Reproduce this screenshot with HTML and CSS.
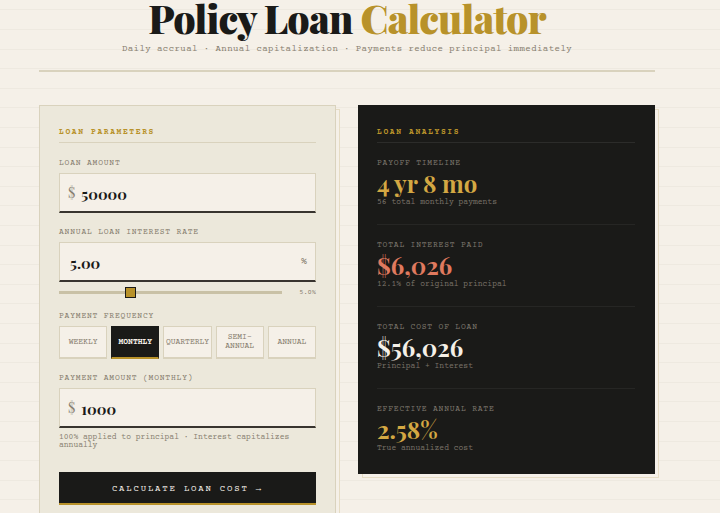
FILE: index.html
```html
<!DOCTYPE html>
<html lang="en">
<head>
<meta charset="utf-8">
<meta name="viewport" content="width=device-width, initial-scale=1">
<title>Policy Loan Calculator</title>
<link rel="stylesheet" href="styles.css">
</head>
<body>
<div class="page">
  <header class="masthead">
    <h1>Policy Loan <span class="accent">Calculator</span></h1>
    <p>Daily accrual · Annual capitalization · Payments reduce principal immediately</p>
  </header>
  <main class="columns">
    <form class="panel parameters">
      <h2>Loan Parameters</h2>
      <div class="field">
        <label for="amount">Loan Amount</label>
        <div class="box"><span class="prefix">$</span><input id="amount" type="text" inputmode="decimal" value="50000"></div>
      </div>
      <div class="field">
        <label for="rate">Annual Loan Interest Rate</label>
        <div class="box"><input id="rate" type="text" inputmode="decimal" value="5.00"><span class="suffix">%</span></div>
        <div class="slider">
          <input type="range" aria-label="Interest rate" min="0.5" max="15" step="0.25" value="5">
          <output>5.0%</output>
        </div>
      </div>
      <fieldset class="field">
        <legend>Payment Frequency</legend>
        <div class="frequency">
          <button type="button">Weekly</button>
          <button type="button" class="active" aria-pressed="true">Monthly</button>
          <button type="button">Quarterly</button>
          <button type="button">Semi-Annual</button>
          <button type="button">Annual</button>
        </div>
      </fieldset>
      <div class="field">
        <label for="payment">Payment Amount (Monthly)</label>
        <div class="box"><span class="prefix">$</span><input id="payment" type="text" inputmode="decimal" value="1000"></div>
        <p class="hint">100% applied to principal · Interest capitalizes annually</p>
      </div>
      <button type="button" class="submit">Calculate Loan Cost →</button>
    </form>
    <section class="panel analysis">
      <h2>Loan Analysis</h2>
      <div class="result">
        <h3>Payoff Timeline</h3>
        <p class="value gold">4 yr 8 mo</p>
        <p class="note">56 total monthly payments</p>
      </div>
      <div class="result">
        <h3>Total Interest Paid</h3>
        <p class="value coral">$6,026</p>
        <p class="note">12.1% of original principal</p>
      </div>
      <div class="result">
        <h3>Total Cost of Loan</h3>
        <p class="value">$56,026</p>
        <p class="note">Principal + Interest</p>
      </div>
      <div class="result">
        <h3>Effective Annual Rate</h3>
        <p class="value gold">2.58%</p>
        <p class="note">True annualized cost</p>
      </div>
    </section>
  </main>
</div>
</body>
</html>
```
FILE: styles.css
```css
:root {
  --paper: #f5f0e8;
  --panel: #ece8db;
  --ink: #1a1a18;
  --rule: #d9d2bd;
  --line: #eee9e0;
  --muted: #857c6d;
  --gold: #b8922a;
  --serif: "Playfair Display", "Liberation Serif", serif;
  --mono: "Courier Prime", "Liberation Mono", monospace;
}

* {
  box-sizing: border-box;
  margin: 0;
  padding: 0;
}

/* Ledger lines: five rules in every 98px */
body {
  background:
    linear-gradient(
      transparent 9px, var(--line) 9px, var(--line) 10px,
      transparent 10px, transparent 29px, var(--line) 29px, var(--line) 30px,
      transparent 30px, transparent 49px, var(--line) 49px, var(--line) 50px,
      transparent 50px, transparent 68px, var(--line) 68px, var(--line) 69px,
      transparent 69px, transparent 88px, var(--line) 88px, var(--line) 89px,
      transparent 89px) 0 0 / 100% 98px,
    var(--paper);
  color: var(--ink);
  font-family: var(--mono);
  font-size: 8px;
}

.page {
  padding: 0 65px 20px 39px;
}

.masthead {
  border-bottom: 2px solid var(--rule);
  margin-bottom: 33px;
  padding-bottom: 15px;
  text-align: center;
}

h1 {
  font: 900 39px/36px var(--serif);
  letter-spacing: -0.02em;
  margin-bottom: 7px;
}

.accent {
  color: var(--gold);
}

.masthead p {
  color: var(--muted);
  font-size: 9px;
  letter-spacing: 0.05em;
  line-height: 12px;
}

.columns {
  align-items: start;
  display: grid;
  gap: 22px;
  grid-template-columns: repeat(2, minmax(0, 1fr));
  isolation: isolate;
}

.panel {
  border: 1px solid var(--rule);
  padding: 20px 19px;
  position: relative;
}

/* Offset sheet behind each panel */
.panel::before {
  background: var(--paper);
  border: 1px solid #e6dcc4;
  content: "";
  inset: 3px -5px -5px 3px;
  position: absolute;
  z-index: -2;
}

.panel::after {
  content: "";
  inset: 0;
  position: absolute;
  z-index: -1;
}

.parameters::after {
  background: var(--panel);
}

.analysis {
  border-color: var(--ink);
  color: var(--paper);
  padding: 20px 19px 20px 18px;
}

.analysis::after {
  background: var(--ink);
}

h2 {
  border-bottom: 1px solid var(--rule);
  color: var(--gold);
  font-size: 8px;
  letter-spacing: 0.2em;
  line-height: 14px;
  margin-bottom: 15px;
  padding-bottom: 2px;
  text-transform: uppercase;
}

.analysis h2 {
  border-color: #2c2c2a;
}

.field {
  border: 0;
  margin-bottom: 14px;
}

label,
legend,
h3 {
  color: var(--muted);
  display: block;
  font-size: 8px;
  font-weight: 400;
  letter-spacing: 0.1em;
  line-height: 12px;
  margin-bottom: 3px;
  text-transform: uppercase;
}

.box {
  align-items: center;
  background: var(--paper);
  border: 1px solid var(--rule);
  border-bottom: 2px solid #38342f;
  display: flex;
  height: 40px;
  padding: 0 8px;
}

.box input {
  background: none;
  border: 0;
  color: var(--ink);
  flex: 1;
  font: 700 15px/24px var(--serif);
  min-width: 0;
  outline: 0;
  padding: 2px 2px 0;
}

.prefix {
  color: var(--muted);
  font: 14px/24px var(--serif);
  margin-right: 4px;
}

.suffix {
  color: var(--muted);
  font-size: 10px;
}

.slider {
  align-items: center;
  color: var(--muted);
  display: flex;
  font-size: 7px;
  gap: 14px;
  height: 10px;
  margin-top: 5px;
}

.slider input {
  appearance: none;
  background: #c9c1a6;
  flex: 1;
  height: 3px;
  min-width: 0;
}

.slider input::-webkit-slider-thumb {
  appearance: none;
  background: var(--gold);
  border: 1px solid var(--ink);
  height: 11px;
  width: 11px;
}

.slider output {
  min-width: 20px;
  text-align: right;
}

.frequency {
  display: grid;
  gap: 4px;
  grid-template-columns: repeat(5, minmax(0, 1fr));
}

.frequency button {
  background: var(--paper);
  border: 1px solid var(--rule);
  border-bottom-width: 2px;
  color: var(--muted);
  font: 8px/9px var(--mono);
  height: 33px;
  text-transform: uppercase;
}

.frequency .active {
  background: var(--ink);
  border-color: var(--ink);
  border-bottom-color: var(--gold);
  color: var(--paper);
  font-weight: 700;
}

.hint {
  color: var(--muted);
  line-height: 8px;
  margin-top: 6px;
}

.submit {
  background: var(--ink);
  border: 0;
  border-bottom: 2px solid var(--gold);
  color: var(--paper);
  font: 9px/12px var(--mono);
  letter-spacing: 0.2em;
  margin-top: 8px;
  padding: 11px 0 8px;
  text-transform: uppercase;
  width: 100%;
}

.result {
  border-bottom: 1px solid #262624;
  margin-bottom: 15px;
  padding-bottom: 17px;
}

.result:last-child {
  border: 0;
  margin: 0;
  padding: 0;
}

.analysis h3 {
  color: #7d776d;
  margin-bottom: 2px;
}

.value {
  font: 700 24px/22px var(--serif);
  margin-bottom: 5px;
}

.gold {
  color: #d4a843;
}

.coral {
  color: #e07a5f;
}

.note {
  color: #7a746a;
  line-height: 8px;
}
```
